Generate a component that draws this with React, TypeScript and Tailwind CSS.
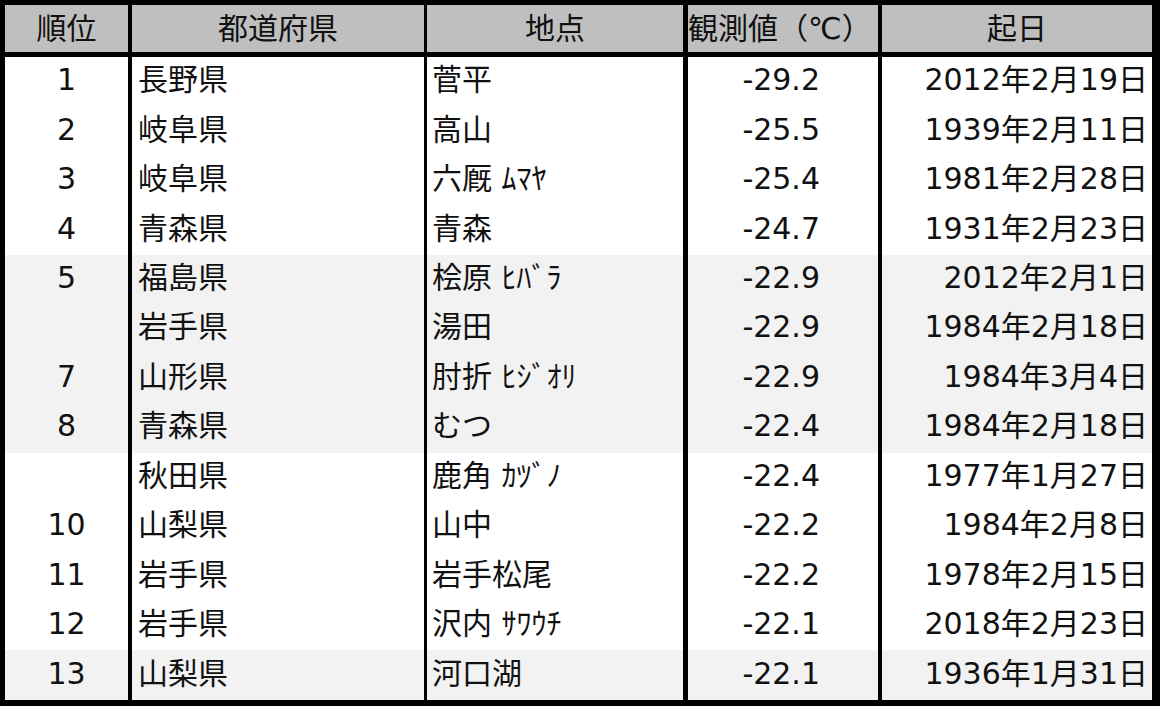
const rows = [
  { rank: "1", pref: "長野県", place: "菅平", value: "-29.2", date: "2012年2月19日", shade: false },
  { rank: "2", pref: "岐阜県", place: "高山", value: "-25.5", date: "1939年2月11日", shade: false },
  { rank: "3", pref: "岐阜県", place: "六厩 ﾑﾏﾔ", value: "-25.4", date: "1981年2月28日", shade: false },
  { rank: "4", pref: "青森県", place: "青森", value: "-24.7", date: "1931年2月23日", shade: false },
  { rank: "5", pref: "福島県", place: "桧原 ﾋﾊﾞﾗ", value: "-22.9", date: "2012年2月1日", shade: true },
  { rank: "", pref: "岩手県", place: "湯田", value: "-22.9", date: "1984年2月18日", shade: true },
  { rank: "7", pref: "山形県", place: "肘折 ﾋｼﾞｵﾘ", value: "-22.9", date: "1984年3月4日", shade: true },
  { rank: "8", pref: "青森県", place: "むつ", value: "-22.4", date: "1984年2月18日", shade: true },
  { rank: "", pref: "秋田県", place: "鹿角 ｶﾂﾞﾉ", value: "-22.4", date: "1977年1月27日", shade: false },
  { rank: "10", pref: "山梨県", place: "山中", value: "-22.2", date: "1984年2月8日", shade: false },
  { rank: "11", pref: "岩手県", place: "岩手松尾", value: "-22.2", date: "1978年2月15日", shade: false },
  { rank: "12", pref: "岩手県", place: "沢内 ｻﾜｳﾁ", value: "-22.1", date: "2018年2月23日", shade: false },
  { rank: "13", pref: "山梨県", place: "河口湖", value: "-22.1", date: "1936年1月31日", shade: true },
];

// column widths include the black separator on the left
const c1 = "w-[123px] flex-shrink-0 flex items-center";
const c2 = "w-[296px] flex-shrink-0 flex items-center border-l-[4px] border-black";
const c3 = "w-[259px] flex-shrink-0 flex items-center border-l-[3px] border-black";
const c4 = "w-[195px] flex-shrink-0 flex items-center border-l-[5px] border-black";
const c5 = "w-[274px] flex-shrink-0 flex items-center border-l-[4px] border-black";

export default function App() {
  return (
    <div
      className="bg-white w-[1162px] h-[711px] text-[#111] text-[30px] leading-none"
      style={{ fontFamily: '"DejaVu Sans", "Noto Sans CJK JP", sans-serif' }}
    >
      <div className="w-[1160px] border-l-[5px] border-t-[5px] border-r-[8px] border-b-[6px] border-black">
        {/* Header */}
        <div className="flex h-[52px] bg-[#bfbfbf] border-b-[5px] border-black">
          <div className={`${c1} justify-center`}>順位</div>
          <div className={`${c2} justify-center`}>都道府県</div>
          <div className={`${c3} justify-center`}>地点</div>
          <div className={`${c4} justify-center pr-[10px]`}>観測値（℃）</div>
          <div className={`${c5} justify-center`}>起日</div>
        </div>

        {/* Body */}
        {rows.map((r, i) => (
          <div
            key={i}
            className={`flex h-[49.46px] ${r.shade ? "bg-[#f2f2f2]" : "bg-white"}`}
          >
            <div className={`${c1} justify-center pb-[3px]`}>{r.rank}</div>
            <div className={`${c2} pl-[6px] pb-[3px]`}>{r.pref}</div>
            <div className={`${c3} pl-[5px] pb-[3px]`}>{r.place}</div>
            <div className={`${c4} justify-end pr-[58px] pb-[3px]`}>{r.value}</div>
            <div className={`${c5} justify-end pr-[4px] pb-[3px]`}>{r.date}</div>
          </div>
        ))}
      </div>
    </div>
  );
}
